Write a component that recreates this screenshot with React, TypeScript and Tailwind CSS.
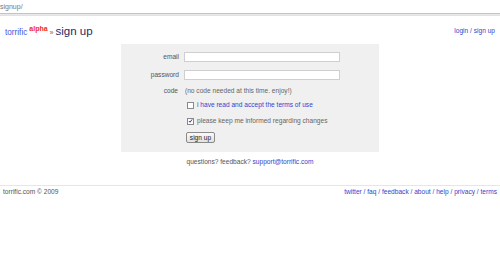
import React from "react";

const font = { fontFamily: '"Liberation Sans", Arial, sans-serif' };

function Box({ checked }: { checked?: boolean }) {
  return (
    <span className="inline-flex w-[7px] h-[7px] border border-[#8a8a8a] bg-white items-center justify-center shrink-0">
      {checked && (
        <svg width="6" height="6" viewBox="0 0 6 6">
          <path d="M1 3 L2.5 4.5 L5 1" stroke="#2a3aa0" strokeWidth="1.2" fill="none" />
        </svg>
      )}
    </span>
  );
}

export default function App() {
  return (
    <div className="w-[500px] h-[257px] bg-white text-[6.6px] text-[#555]" style={font}>
      <div className="h-[13px] pl-0 pt-[3px] leading-[8px] text-[7px] text-[#777]">signup/</div>
      <div className="h-[3px] border-t border-t-[#c4c4c4] border-b border-b-[#e2e2e2] bg-[#e8e8e8]" />
      <div className="flex justify-between items-start px-[5px] mt-[7px] h-[21px]">
        <div className="flex items-baseline">
          <span className="text-[8.2px] text-[#4455dd]">torrific</span>
          <span className="text-[7px] font-bold text-[#ee2a2a] ml-[2px] relative -top-[4px]">alpha</span>
          <span className="text-[7px] text-[#667] mx-[2px]">»</span>
          <span className="text-[11.5px] text-[#1c2a66]">sign up</span>
        </div>
        <a className="text-[6.6px] text-[#3344cc] mt-[3px]">login / sign up</a>
      </div>
      <div className="mx-auto w-[258px] h-[108px] bg-[#f0f0f0] pt-[8px]">
        <div className="flex items-center h-[10px]">
          <span className="w-[58px] text-right text-[#555]">email</span>
          <span className="ml-[5px] w-[156px] h-[10px] bg-white border border-[#cfcfcf]" />
        </div>
        <div className="flex items-center h-[10px] mt-[8px]">
          <span className="w-[58px] text-right text-[#555]">password</span>
          <span className="ml-[5px] w-[156px] h-[10px] bg-white border border-[#cfcfcf]" />
        </div>
        <div className="flex items-center h-[8px] mt-[7px]">
          <span className="w-[57px] text-right text-[#555]">code</span>
          <span className="ml-[7px] text-[#666]">(no code needed at this time. enjoy!)</span>
        </div>
        <div className="flex items-center h-[8px] mt-[6px] ml-[66px]">
          <Box />
          <a className="ml-[3px] text-[#3344cc]">i have read and accept the terms of use</a>
        </div>
        <div className="flex items-center h-[8px] mt-[8px] ml-[66px]">
          <Box checked />
          <span className="ml-[3px] text-[#666]">please keep me informed regarding changes</span>
        </div>
        <div className="ml-[65px] mt-[7px]">
          <button className="w-[29px] h-[11px] border border-[#8a8a8a] rounded-[2px] bg-gradient-to-b from-[#fafafa] to-[#e2e2e2] text-[6.6px] text-[#222] leading-[9px] p-0" style={font}>
            sign up
          </button>
        </div>
      </div>
      <div className="text-center mt-[6px] h-[8px] leading-[8px] text-[#555]">
        questions? feedback? <a className="text-[#3344cc]">support@torrific.com</a>
      </div>
      <div className="mt-[19px] border-t border-t-[#e6e6e6] flex justify-between px-[3px] pt-[2px] leading-[8px]">
        <span className="text-[#555]">torrific.com © 2009</span>
        <span className="text-[#3344cc]">twitter / faq / feedback / about / help / privacy / terms</span>
      </div>
    </div>
  );
}
